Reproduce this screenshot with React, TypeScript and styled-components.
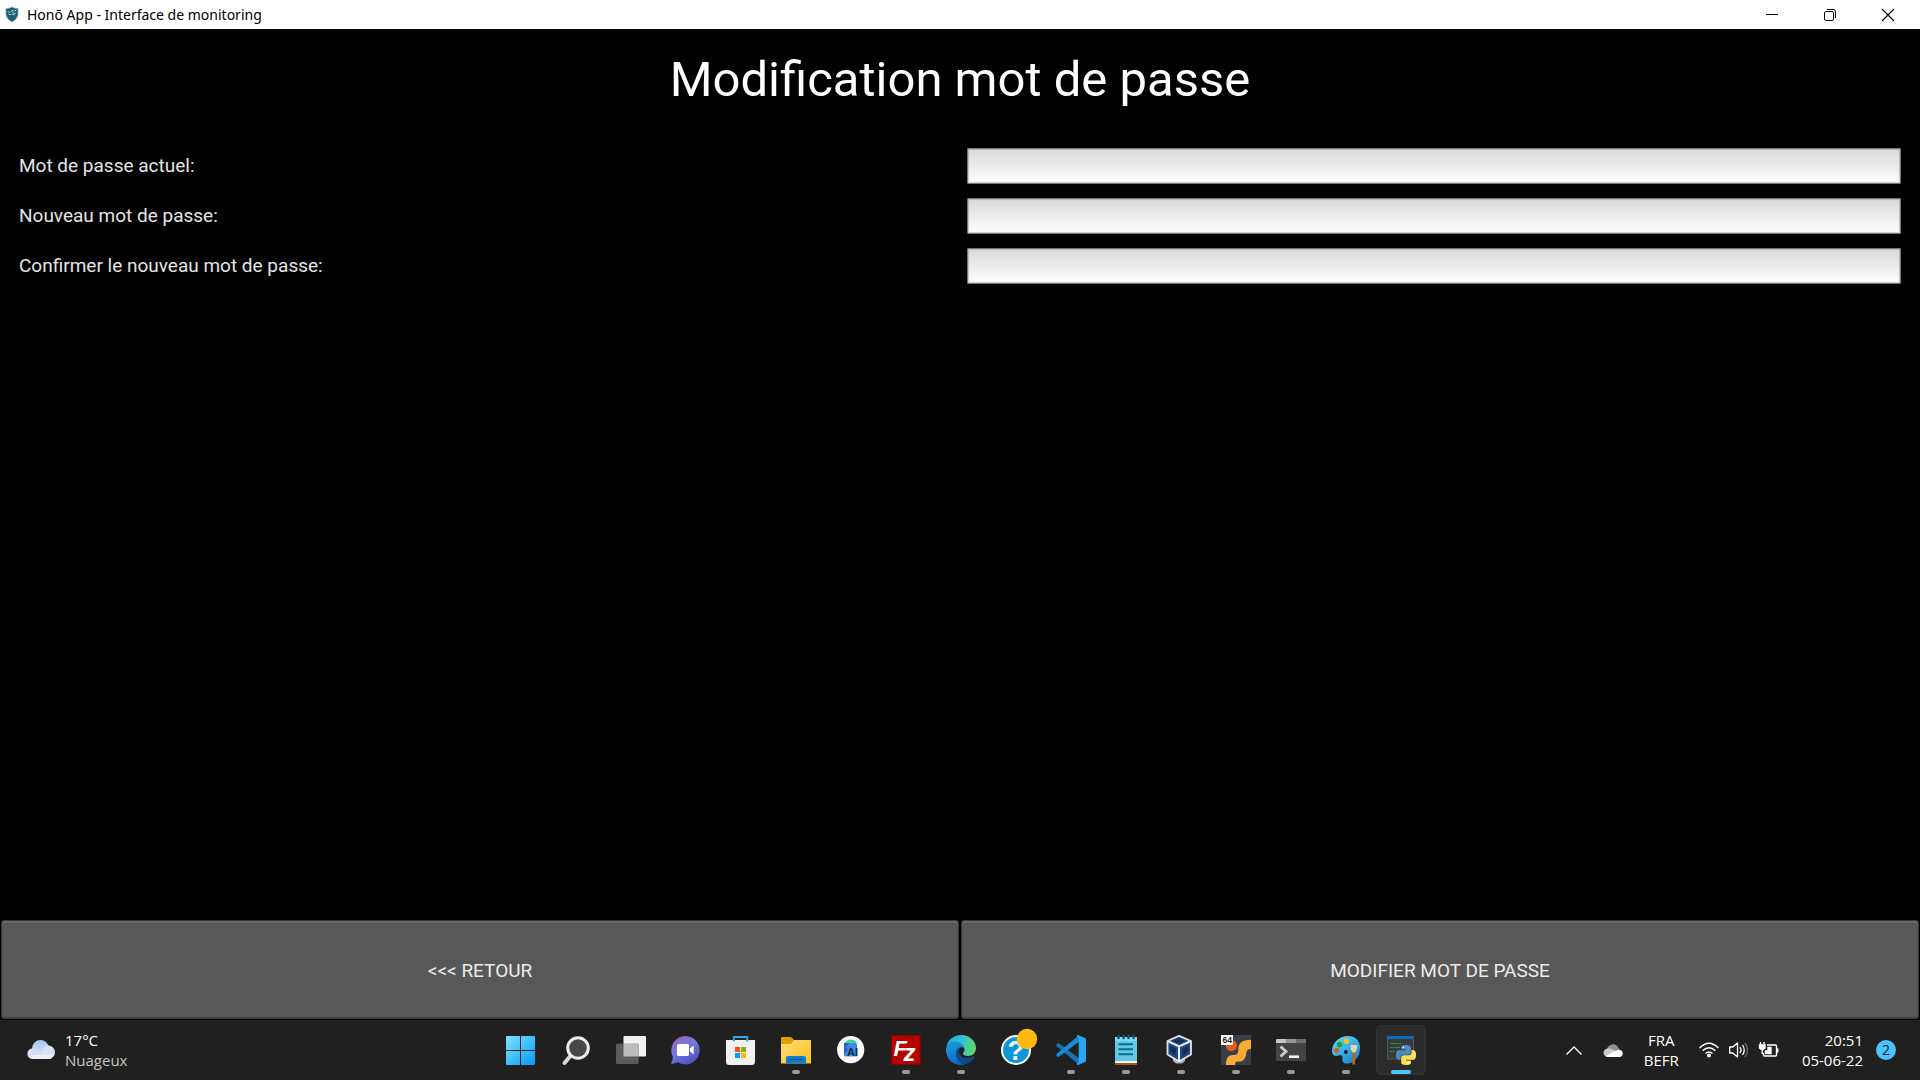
import React from "react";
import styled, { createGlobalStyle } from "styled-components";

const GlobalStyle = createGlobalStyle`
  *, *::before, *::after { box-sizing: border-box; }
  body { margin: 0; background: #000; }
  button, input { font: inherit; }
`;

const Window = styled.div`
  min-height: 100vh;
  display: flex;
  flex-direction: column;
  background: #000;
  color: #fff;
  font-family: Roboto, sans-serif;
`;

const TitleBar = styled.header`
  display: flex;
  align-items: center;
  height: 29px;
  padding: 0 3px 0 5px;
  background: #fff;
  color: #000;
  font: 14px/28px "Noto Sans", "Open Sans", sans-serif;
`;

const AppName = styled.span`
  flex: 1;
  padding-left: 8px;
`;

const CaptionButton = styled.button`
  display: grid;
  place-items: center;
  width: 58px;
  height: 28px;
  padding: 0;
  border: 0;
  background: transparent;
  color: #000;
`;

const Screen = styled.main`
  flex: 1;
  display: flex;
  flex-direction: column;
`;

const Heading = styled.h1`
  margin: 0;
  font-size: 49px;
  font-weight: 400;
  line-height: 102px;
  text-align: center;
`;

const Form = styled.form`
  flex: 1;
  display: flex;
  flex-direction: column;
`;

const Fields = styled.div`
  flex: 1;
  display: grid;
  grid-template-columns: 1fr 1fr;
  align-content: start;
  gap: 14px;
  padding: 17px 19px;
`;

const Label = styled.label`
  color: #e4e4e4;
  font-size: 19px;
  line-height: 36px;
`;

const PasswordInput = styled.input`
  width: 100%;
  height: 36px;
  padding: 0 8px;
  border: 1px solid #777;
  border-radius: 1px;
  background: linear-gradient(#dadada, #fdfdfd);
  box-shadow: inset 0 0 1px 1px rgba(120, 120, 120, 0.35);
  color: #000;
  font-size: 19px;
`;

const Actions = styled.div`
  display: grid;
  grid-template-columns: 1fr 1fr;
  gap: 2px;
  padding: 0 1px 1px;
`;

const ActionButton = styled.button`
  height: 99px;
  padding: 2px 0 0;
  border: 1px solid #383838;
  border-radius: 3px;
  background: #585858;
  box-shadow: inset 0 2px 0 #666, inset 0 -1px 0 #484848;
  color: #ececec;
  font-size: 19px;
`;

const Taskbar = styled.footer`
  display: grid;
  grid-template-columns: 1fr auto 1fr;
  align-items: center;
  height: 60px;
  padding: 0 24px 0 26px;
  background: #202020;
  font: 15px/20px "Open Sans", "Noto Sans", sans-serif;
`;

const Weather = styled.div`
  display: flex;
  align-items: center;
  gap: 9px;
`;

const Lines = styled.div<{ $align?: string }>`
  display: flex;
  flex-direction: column;
  text-align: ${(p) => p.$align ?? "left"};
`;

const Muted = styled.span`
  color: #c4c4c4;
`;

const Apps = styled.nav`
  display: flex;
  gap: 5px;
`;

type AppState = "idle" | "running" | "active";

const AppButton = styled.button<{ $state: AppState }>`
  position: relative;
  display: grid;
  place-items: center;
  width: 50px;
  height: 50px;
  padding: 0;
  border: 1px solid ${(p) => (p.$state === "active" ? "#333" : "transparent")};
  border-radius: 5px;
  background: ${(p) => (p.$state === "active" ? "#2c2c2c" : "transparent")};

  &::after {
    content: "";
    position: absolute;
    left: 50%;
    bottom: 0;
    width: ${(p) => (p.$state === "active" ? 20 : 8)}px;
    height: 4px;
    border-radius: 2px;
    transform: translateX(-50%);
    background: ${(p) => (p.$state === "active" ? "#4cc2ff" : p.$state === "running" ? "#9a9a9a" : "transparent")};
  }
`;

const Glyph = styled.svg`
  display: block;
  overflow: visible;
`;

const Tray = styled.div`
  display: flex;
  align-items: center;
  justify-content: flex-end;
`;

const TrayIcons = styled.div`
  display: flex;
  align-items: center;
  gap: 10px;
  margin: 0 23px 0 20px;
`;

const Hidden = styled.div`
  display: flex;
  align-items: center;
  gap: 22px;
  margin-right: 20px;
`;

const Badge = styled.span`
  width: 20px;
  margin-left: 13px;
  border-radius: 50%;
  background: #4cc2ff;
  color: #10202a;
  font-size: 14px;
  text-align: center;
`;

const ShieldLogo = () => (
  <Glyph width="14" height="17" viewBox="0 0 15 17" aria-hidden="true">
    <path d="M1 2.2Q4.500 2 7.500.4Q10.500 2 14 2.200V8.500Q13.400 13.500 7.500 16.600Q1.600 13.500 1 8.500Z" fill="#126174" stroke="#9fb4b8" strokeWidth=".7" />
    <path d="M3 5.500l2 .5M6 5.200l3-1M10 4.600l2-.5M4 8q1.500 1.500 3 0M8 8.500q2 1 3.500-1.500M8 6.500l2 .5" fill="none" stroke="#d5e6e8" strokeWidth="1" />
  </Glyph>
);

const icons: Record<string, React.ReactNode> = {
  start: (
    <>
      <defs>
        <linearGradient id="win" x1="0" y1="0" x2="30" y2="30" gradientUnits="userSpaceOnUse">
          <stop offset="0" stopColor="#8be2ff" /><stop offset=".5" stopColor="#3fc3fb" /><stop offset="1" stopColor="#0a93f8" />
        </linearGradient>
      </defs>
      <path fill="url(#win)" d="M2 1h13v14H1V2a1 1 0 0 1 1-1zM16 1h13a1 1 0 0 1 1 1v13H16zM1 16h14v14H2a1 1 0 0 1-1-1zM16 16h14v13a1 1 0 0 1-1 1H16z" />
    </>
  ),
  search: (
    <>
      <path d="M4.500 28L10 21.500" stroke="#d5d9dc" strokeWidth="4" strokeLinecap="round" />
      <circle cx="18" cy="13" r="10.300" fill="#484848" stroke="#eceeef" strokeWidth="3" />
    </>
  ),
  tasks: (
    <>
      <rect x="8.500" y="1" width="22.500" height="20.500" rx="1" fill="#f2f2f2" />
      <rect x="1" y="8.700" width="22.700" height="20.300" rx="1" fill="#5c5c5c" />
      <path d="M8.500 8.700h15.200v12.800H8.500z" fill="#bcbcbc" />
    </>
  ),
  chat: (
    <>
      <defs>
        <linearGradient id="chat" x1="5" y1="2" x2="22" y2="29" gradientUnits="userSpaceOnUse">
          <stop offset="0" stopColor="#9a65b5" /><stop offset=".45" stopColor="#7378d8" /><stop offset="1" stopColor="#4a50c8" />
        </linearGradient>
      </defs>
      <path d="M15.500 1A14.200 14.200 0 1 1 8 27.300L1.200 29.200L3 22A14.200 14.200 0 0 1 15.500 1z" fill="url(#chat)" />
      <rect x="7" y="9" width="12" height="12" rx="1.500" fill="#fff" />
      <path d="M20 13.500l3.700-3v9l-3.700-3z" fill="#fff" />
    </>
  ),
  store: (
    <>
      <path d="M8.800 7V2h13.400v5" fill="none" stroke="#2aa9e8" strokeWidth="2" />
      <path d="M1 5h29v21.500a3.500 3.500 0 0 1-3.500 3.500h-22A3.500 3.500 0 0 1 1 26.500z" fill="#f1f1f1" />
      <path d="M8.800 5v1.500M22.200 5v1.500" stroke="#2aa9e8" strokeWidth="2" />
      <path d="M10 12h5v5h-5z" fill="#f25022" /><path d="M16 12h5v5h-5z" fill="#7fba00" />
      <path d="M10 18h5v5h-5z" fill="#00a4ef" /><path d="M16 18h5v5h-5z" fill="#ffb900" />
    </>
  ),
  folder: (
    <>
      <defs>
        <linearGradient id="folder" x1="0" y1="5" x2="20" y2="29" gradientUnits="userSpaceOnUse">
          <stop offset="0" stopColor="#ffe07a" /><stop offset="1" stopColor="#fcc42f" />
        </linearGradient>
      </defs>
      <path d="M1 3q0-1 1-1h9l3 3v4H1z" fill="#dfa000" />
      <path d="M1 9h10l3-4h17v23.400H1z" fill="url(#folder)" />
      <path d="M6 28.400V23q0-2 2-2h16q2 0 2 2v5.400z" fill="#0f80d0" />
      <path d="M9.500 24.500h13" stroke="#064d86" strokeWidth="1.200" />
    </>
  ),
  studio: (
    <>
      <circle cx="15.700" cy="14.700" r="13.600" fill="#fff" />
      <path d="M10 8.500a6 4 0 0 1 12 0z" fill="#3ddc84" />
      <rect x="9" y="8" width="13" height="13.500" rx="1.500" fill="#4285f4" />
      <path d="M9 8h5l-3 4 2 3-4 4z" fill="#1b64c9" />
      <text x="12" y="21" fontFamily="Liberation Sans, sans-serif" fontSize="11" fontWeight="700" fill="#073042">AI</text>
    </>
  ),
  filezilla: (
    <>
      <rect x="1.500" y=".5" width="29" height="29" fill="#b50000" stroke="#8c0000" strokeDasharray="2 1" />
      <text x="3.500" y="21" fontFamily="Liberation Sans, sans-serif" fontSize="22" fontWeight="700" fontStyle="italic" fill="#fff">F</text>
      <text x="13.500" y="25.500" fontFamily="Liberation Sans, sans-serif" fontSize="24" fontWeight="700" fontStyle="italic" fill="#fff">z</text>
    </>
  ),
  edge: (
    <>
      <defs>
        <linearGradient id="edgeTop" x1="2" y1="8" x2="31" y2="14" gradientUnits="userSpaceOnUse">
          <stop offset="0" stopColor="#29a9e6" /><stop offset=".5" stopColor="#2fc4d4" /><stop offset="1" stopColor="#64dc52" />
        </linearGradient>
        <linearGradient id="edgeBody" x1="2" y1="8" x2="14" y2="30" gradientUnits="userSpaceOnUse">
          <stop offset="0" stopColor="#1b9de2" /><stop offset="1" stopColor="#0b62bb" />
        </linearGradient>
      </defs>
      <path d="M1.500 11C3.500 4 9.500 0 16 0C24.500 0 31 6 31 13C31 18 27.500 21 23 21C19.500 21 18 19.800 18 18.700C18 17.500 19.500 17 19.500 14.500C19.500 10 14 7 9 7C5.500 7 3 8.800 1.500 11z" fill="url(#edgeTop)" />
      <path d="M1 15C1 10 4.500 6.800 9.500 6.800C15 6.800 19.500 10 19.500 14C18.500 12 16 11.500 14 13C11 15 10.500 19 12 22.500C13.500 26.500 17 29.500 20.500 29.200C10 32.500 1 25 1 15z" fill="url(#edgeBody)" />
      <path d="M14 13C11 15 10.300 19 12 23C14 27.500 18 29.700 21 29C25 27.700 28 25 29.700 22C29.900 21.300 29.300 21 28.800 21.300C23 24.300 14 23 14 16.500Q14 14.300 15.500 12.500z" fill="#114a8b" />
    </>
  ),
  help: (
    <>
      <circle cx="16" cy="15" r="14" fill="#0c96d8" stroke="#fff" strokeWidth="2" />
      <text x="15.800" y="24.500" textAnchor="middle" fontFamily="Liberation Sans, sans-serif" fontSize="27" fontWeight="700" fill="#fff">?</text>
      <circle cx="27" cy="4" r="10.200" fill="#ffb90f" />
    </>
  ),
  code: (
    <>
      <path d="M2 8.800q1-1.100 2.200-.3L24 23.300V29.800L1.700 11.200q-1-1 .3-2.400z" fill="#1273b9" />
      <path d="M2 21.200q1 1.100 2.200.3L24 6.700V.2L1.700 18.800q-1 1 .3 2.400z" fill="#168bd8" />
      <path d="M23 .1L31 3.500V26.500L23 29.900Q22 30 21.500 29L23.700 27V3L21.500 1Q22 0 23 .1z" fill="#2aa5f2" />
    </>
  ),
  notepad: (
    <>
      <path d="M5 2h22v24H5z" fill="#62c9e4" /><path d="M5 2h22v4H5z" fill="#7fdcf0" />
      <path d="M5 26h22v2H5z" fill="#f2eee9" /><path d="M5 28h22v2H5z" fill="#a75515" />
      <path d="M8.500 9.300h14.500M8.500 14.300h14.500M8.500 19.300h14.500" stroke="#0b6b8c" strokeWidth="2" />
      <path d="M8.500 1v2M13.500 1v2M18.500 1v2M23.500 1v2" stroke="#0b5876" strokeWidth="2.500" strokeLinecap="round" />
    </>
  ),
  vbox: (
    <>
      <path d="M8 22h12v4l-3 2.500h-6L8 26z" fill="#a8adc4" />
      <path d="M14 .8L26 6V19.500L14 26.500L2.500 19.500V6z" fill="#23477c" stroke="#dfe3ee" strokeWidth="1.800" strokeLinejoin="round" />
      <path d="M2.500 6L14 11.500L26 6M14 11.500V26" fill="none" stroke="#e9ecf4" strokeWidth="2" />
      <path d="M8 6l6-2.700 6 2.700-6 2.800z" fill="#122f58" />
      <path d="M5 10.500l6 3v7l-6-3.500zM23.500 10.500l-6 3v7l6-3.500z" fill="#122f58" />
    </>
  ),
  bridge: (
    <>
      <path d="M1 0h30v30H1z" fill="#3a3e4a" />
      <circle cx="11.500" cy="10.500" r="5.500" fill="#ee5b17" />
      <path d="M6 30C6 22 9 19.500 14 20C19 20 18 16 18.500 12C19.500 7 24 4.500 31 5V14C27 14 26.500 16 26 20C25 25 22 27 18 26.500C15 26.500 15.500 28 15 30z" fill="#f9ab35" />
      <path d="M1 0h12v10H1z" fill="#fff" />
      <text x="2.500" y="8" fontFamily="Liberation Sans, sans-serif" fontSize="8.500" fontWeight="700" fill="#222">64</text>
    </>
  ),
  terminal: (
    <>
      <rect x="1" y="4" width="30" height="22" rx="1.500" fill="#444" />
      <path d="M1 8V5q0-1 1-1h9v4z" fill="#c7c7c7" /><path d="M11 4h10v4H11z" fill="#969696" /><path d="M21 4h9q1 0 1 1v3H21z" fill="#6e6e6e" />
      <path d="M5.500 11.500l5.500 5-5.500 5" fill="none" stroke="#ccc" strokeWidth="2.800" />
      <path d="M14 21.700h10" stroke="#f4f4f4" strokeWidth="2.600" />
    </>
  ),
  paint: (
    <>
      <defs>
        <linearGradient id="paint" x1="5" y1="2" x2="24" y2="28" gradientUnits="userSpaceOnUse">
          <stop offset="0" stopColor="#59d5f7" /><stop offset="1" stopColor="#1789d3" />
        </linearGradient>
      </defs>
      <path d="M18 1C26 1 30 6 30 13C30 21 25 28 18 28.500C13.500 29 12 26.500 12.500 23.500C13 20.500 11 19.500 8.500 20.500C5 22 2 20 2 16C2 8 9 1 18 1zM15.800 15a2 2 0 1 0 0 4 2 2 0 0 0 0-4z" fill="url(#paint)" fillRule="evenodd" />
      <circle cx="16.500" cy="6.300" r="2.700" fill="#fcc01e" /><circle cx="9.500" cy="9.500" r="2.700" fill="#2b9b2b" /><circle cx="6.500" cy="15.500" r="2.500" fill="#e0562a" />
      <path d="M22.300 17h2.800v12.500h-2.800z" fill="#b66a1a" />
      <path d="M20.500 10h6.800l-.5 4.500-1.800 3h-2.300l-1.800-3z" fill="#ead2b0" />
    </>
  ),
  python: (
    <>
      <path d="M2.500 1.500h26v22.500h-26z" fill="#383b3c" stroke="#545759" />
      <path d="M2 1h27v3H2z" fill="#0c6db4" />
      <path d="M5 8.500h8M13.500 8.500h3M5 12.500h3M9 12.500h6M5 16.500h5" stroke="#388a3c" strokeWidth="1.200" />
      <g transform="translate(11 10) scale(.833)">
        <path fill="#4b8bbe" d="M14.250.18l.9.2.73.26.59.3.45.32.34.34.25.34.16.33.1.3.04.26.02.2-.01.13V8.5l-.05.63-.13.55-.21.46-.26.38-.3.31-.33.25-.35.19-.35.14-.33.1-.3.07-.26.04-.21.02H8.770l-.69.05-.59.14-.5.22-.41.27-.33.32-.27.35-.2.36-.15.37-.1.35-.07.32-.04.27-.02.21v3.06H3.170l-.21-.03-.28-.07-.32-.12-.35-.18-.36-.26-.36-.36-.35-.46-.32-.59-.28-.73-.21-.88-.14-1.05-.05-1.23.06-1.22.16-1.04.24-.87.32-.71.36-.57.4-.44.42-.33.42-.24.4-.16.36-.1.32-.05.24-.01h.16l.06.01h8.16v-.83H6.180l-.01-2.75-.02-.37.05-.34.11-.31.17-.28.25-.26.31-.23.38-.2.44-.18.51-.15.58-.12.64-.1.71-.06.77-.04.84-.02 1.27.05z" />
        <circle cx="8.900" cy="2.900" r="1" fill="#fff" />
        <path fill="#ffdf5a" d="M21.100 6.110l.28.06.32.12.35.18.36.27.36.35.35.47.32.59.28.73.21.88.14 1.04.05 1.23-.06 1.23-.16 1.04-.24.86-.32.71-.36.57-.4.45-.42.33-.42.24-.4.16-.36.09-.32.05-.24.02-.16-.01h-8.22v.82h5.84l.01 2.76.02.36-.05.34-.11.31-.17.29-.25.25-.31.24-.38.2-.44.17-.51.15-.58.13-.64.09-.71.07-.77.04-.84.01-1.27-.04-1.07-.14-.9-.2-.73-.25-.59-.3-.45-.33-.34-.34-.25-.34-.16-.33-.1-.3-.04-.25-.02-.2.01-.13v-5.34l.05-.64.13-.54.21-.46.26-.38.3-.32.33-.24.35-.2.35-.14.33-.1.3-.06.26-.04.21-.02.13-.01h5.84l.69-.05.59-.14.5-.21.41-.28.33-.32.27-.35.2-.36.15-.36.1-.35.07-.32.04-.28.02-.21V6.070h2.09z" />
        <circle cx="15" cy="21.200" r="1" fill="#fff" />
      </g>
    </>
  ),
};

const apps: { icon: string; label: string; state: AppState }[] = [
  { icon: "start", label: "Démarrer", state: "idle" },
  { icon: "search", label: "Rechercher", state: "idle" },
  { icon: "tasks", label: "Vue des tâches", state: "idle" },
  { icon: "chat", label: "Conversation", state: "idle" },
  { icon: "store", label: "Microsoft Store", state: "idle" },
  { icon: "folder", label: "Explorateur de fichiers", state: "running" },
  { icon: "studio", label: "Android Studio", state: "idle" },
  { icon: "filezilla", label: "FileZilla", state: "running" },
  { icon: "edge", label: "Microsoft Edge", state: "running" },
  { icon: "help", label: "Aide", state: "idle" },
  { icon: "code", label: "Visual Studio Code", state: "running" },
  { icon: "notepad", label: "Bloc-notes", state: "running" },
  { icon: "vbox", label: "VirtualBox", state: "running" },
  { icon: "bridge", label: "Outil 64 bits", state: "running" },
  { icon: "terminal", label: "Terminal", state: "running" },
  { icon: "paint", label: "Paint", state: "running" },
  { icon: "python", label: "Python", state: "active" },
];

const fields = [
  { id: "current", label: "Mot de passe actuel:" },
  { id: "next", label: "Nouveau mot de passe:" },
  { id: "confirm", label: "Confirmer le nouveau mot de passe:" },
];

export default function App() {
  return (
    <Window>
      <GlobalStyle />
      <TitleBar>
        <ShieldLogo />
        <AppName>Honō App - Interface de monitoring</AppName>
        <CaptionButton aria-label="Réduire">
          <Glyph width="12" height="12" viewBox="0 0 12 12"><path d="M0 5.500h12" stroke="#000" /></Glyph>
        </CaptionButton>
        <CaptionButton aria-label="Restaurer">
          <Glyph width="12" height="12" viewBox="0 0 12 12" fill="none" stroke="#000">
            <rect x=".5" y="2.500" width="9" height="9" rx="1.500" />
            <path d="M3 .5h6q2.500 0 2.500 2.500v6" />
          </Glyph>
        </CaptionButton>
        <CaptionButton aria-label="Fermer">
          <Glyph width="12" height="12" viewBox="0 0 12 12"><path d="M0 0l12 12M12 0L0 12" stroke="#000" strokeWidth="1.200" /></Glyph>
        </CaptionButton>
      </TitleBar>

      <Screen>
        <Heading>Modification mot de passe</Heading>
        <Form onSubmit={(e) => e.preventDefault()}>
          <Fields>
            {fields.map((f) => (
              <React.Fragment key={f.id}>
                <Label htmlFor={f.id}>{f.label}</Label>
                <PasswordInput id={f.id} type="password" />
              </React.Fragment>
            ))}
          </Fields>
          <Actions>
            <ActionButton type="button">&lt;&lt;&lt; RETOUR</ActionButton>
            <ActionButton type="submit">MODIFIER MOT DE PASSE</ActionButton>
          </Actions>
        </Form>
      </Screen>

      <Taskbar>
        <Weather>
          <Glyph width="30" height="20" viewBox="0 0 30 20" aria-hidden="true">
            <defs>
              <linearGradient id="cloud" x1="0" y1="0" x2="0" y2="20" gradientUnits="userSpaceOnUse">
                <stop offset="0" stopColor="#a5c3ee" /><stop offset="1" stopColor="#eef2fa" />
              </linearGradient>
            </defs>
            <circle cx="14.500" cy="8.500" r="8.500" fill="url(#cloud)" />
            <path d="M6 8.500a6 6 0 0 1 6 5.500l2 5H6A5.300 5.300 0 0 1 6 8.500z" fill="#d3def4" />
            <path d="M23 5.500a6.800 6.800 0 0 1 0 13.500H6q8 0 10-6a7 7 0 0 1 7-7.500z" fill="#dae3f0" />
            <path d="M5 15h22q-1 4-4 4H7q-3-1-2-4z" fill="#ebf0f8" />
          </Glyph>
          <Lines>
            <span>17°C</span>
            <Muted>Nuageux</Muted>
          </Lines>
        </Weather>

        <Apps>
          {apps.map((a) => (
            <AppButton key={a.icon} $state={a.state} aria-label={a.label}>
              <Glyph width="30" height="30" viewBox="1 0 30 30">{icons[a.icon]}</Glyph>
            </AppButton>
          ))}
        </Apps>

        <Tray>
          <Hidden>
            <Glyph width="16" height="9" viewBox="0 0 16 9" aria-hidden="true">
              <path d="M.5 8.500L8 1l7.500 7.500" fill="none" stroke="#fff" strokeWidth="1.300" />
            </Glyph>
            <Glyph width="20" height="13" viewBox="0 0 20 13" aria-hidden="true">
              <path d="M3 6a6 6 0 0 1 11.500-2L17 7l-9 3z" fill="#8f8f8f" />
              <path d="M3.500 4.500q3-.8 6 1.500l6 3-8 4H4A4.200 4.200 0 0 1 3.500 4.500z" fill="#c9c9c9" />
              <path d="M2 12l8-4.500q3-2 6-1.500a3.600 3.600 0 0 1 0 7H4q-1.500 0-2-1z" fill="#fff" />
            </Glyph>
          </Hidden>
          <Lines $align="center">
            <span>FRA</span>
            <span>BEFR</span>
          </Lines>
          <TrayIcons>
            <Glyph width="20" height="16" viewBox="0 0 20 16" fill="none" stroke="#fff" strokeWidth="1.400" aria-hidden="true">
              <path d="M.6 6Q10-3.500 19.400 6M3.600 8.800q6.400-6 12.800 0M6.500 11.500q3.500-3.200 7 0" />
              <circle cx="10" cy="13.500" r="1.400" fill="#fff" />
            </Glyph>
            <Glyph width="20" height="16" viewBox="0 0 20 16" fill="none" stroke="#fff" strokeWidth="1.300" aria-hidden="true">
              <path d="M.7 5h3L8.500 1v14l-4.800-4H.7z" strokeLinejoin="round" />
              <path d="M11 5q2 3 0 6M13.500 3q3.500 5 0 10" />
              <path d="M16 1q5 7 0 14" stroke="#6b6b6b" />
            </Glyph>
            <Glyph width="20" height="16" viewBox="0 0 20 16" fill="none" stroke="#fff" strokeWidth="1.400" aria-hidden="true">
              <path d="M8 3h8.500q1 0 1 1v9q0 1-1 1h-11q-1 0-1-1v-2" />
              <path d="M18.500 6.500v4" strokeWidth="2" />
              <path d="M9 5.500h3v6H6.500V9H9z" fill="#fff" />
              <path d="M1.500 0v3M5 0v3M3.200 6v6" />
              <path d="M.5 3h5.500v3q-2.700 3-5.500 0z" fill="#fff" />
            </Glyph>
          </TrayIcons>
          <Lines $align="right">
            <span>20:51</span>
            <span>05-06-22</span>
          </Lines>
          <Badge>2</Badge>
        </Tray>
      </Taskbar>
    </Window>
  );
}
